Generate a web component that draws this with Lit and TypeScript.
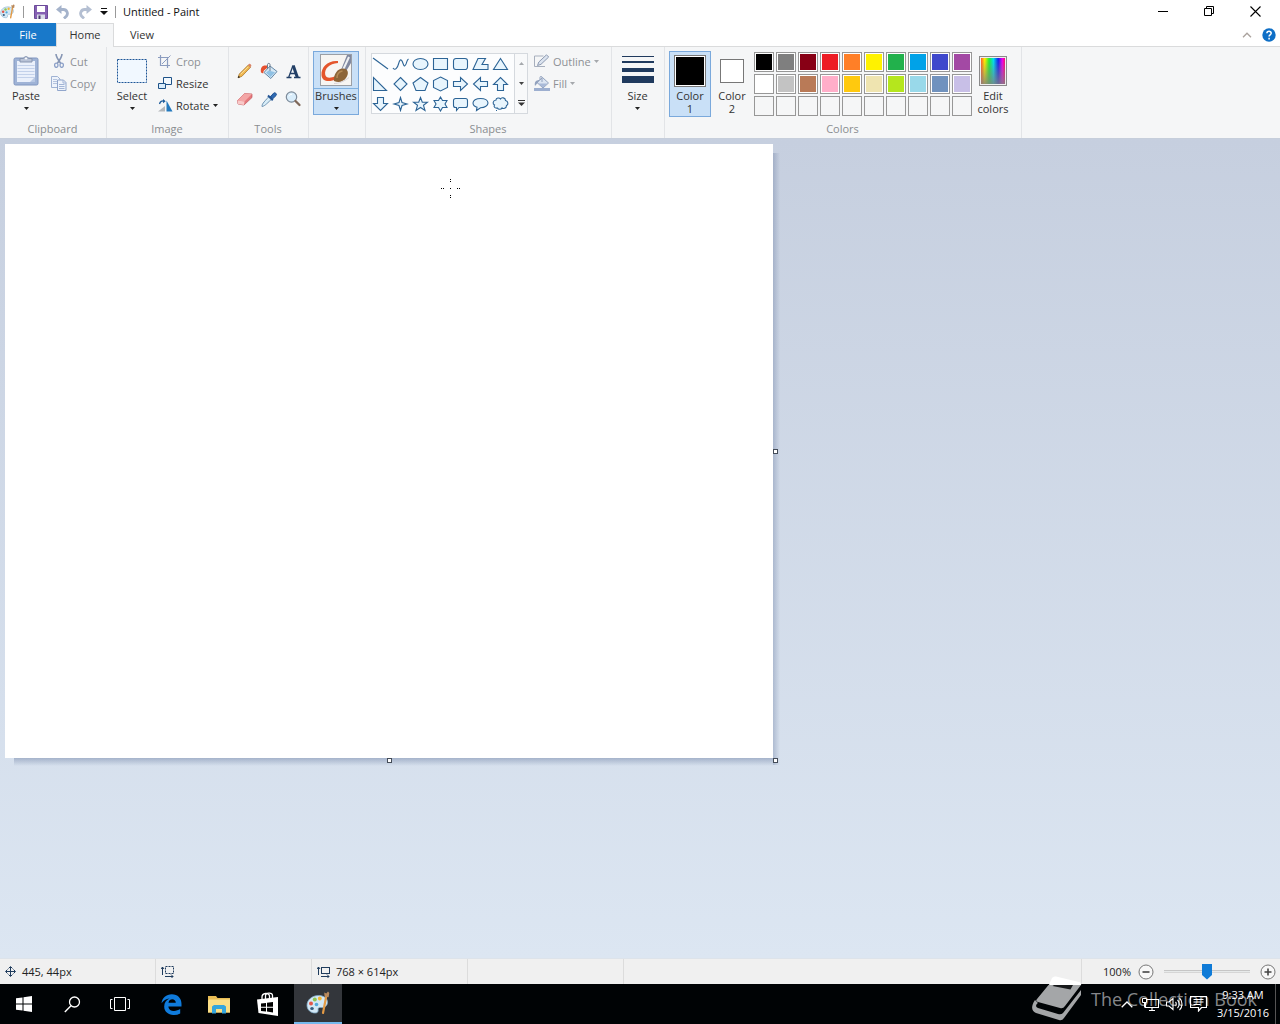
import { LitElement, html, svg, css, nothing, TemplateResult, SVGTemplateResult } from "lit";
import { customElement, property, state } from "lit/decorators.js";
import { classMap } from "lit/directives/class-map.js";
import { styleMap } from "lit/directives/style-map.js";

const icon = (w: number, h: number, body: SVGTemplateResult) =>
  html`<svg width=${w} height=${h} viewBox="0 0 ${w} ${h}" fill="none" aria-hidden="true">${body}</svg>`;

const caret = (color = "#222") => icon(5, 3, svg`<path d="M0 0H5L2.500 3Z" fill=${color}/>`);

const palette = (size: number) => html`<svg width=${size} height=${size} viewBox="0 0 24 24" fill="none" aria-hidden="true">
  <path d="M12.500 4.500C6 4.500 1 9 1 14.200c0 4.600 3.600 7.800 8.200 7.800 2.600 0 3.200-1.700 2.900-3.300-.3-1.700 1-2.500 2.600-2.200 3.900.6 6.800-1.800 6.800-5.200 0-4.200-4-6.800-9-6.800Z" fill="#d3e8f5" stroke="#7fa9c6" stroke-width=".8"/>
  <ellipse cx="6" cy="17.500" rx="1.800" ry="1.500" fill="#355d80"/>
  <circle cx="5" cy="12.500" r="2" fill="#e2574b"/>
  <circle cx="8.800" cy="8.600" r="2" fill="#8fc553"/>
  <circle cx="13.800" cy="7.500" r="1.900" fill="#f2b736"/>
  <circle cx="10.500" cy="13.500" r="1.800" fill="#53a9dc"/>
  <path d="M20.500 4 17 22" stroke="#e39a45" stroke-width="2.200" stroke-linecap="round"/>
  <path d="M18.600 5.500 18.200 1.500 20.300 2.500 22 .5 23.300 2 22.600 6.300Z" fill="#b98a5e"/>
</svg>`;

const icons = {
  save: icon(14, 14, svg`<path d="M.5.5h13v13H.5Z" fill="#8660b3" stroke="#6b4a99"/><path d="M3 1h8v6H3Z" fill="#fff"/><path d="M3 9.500h8V14H3Z" fill="#d9dce8"/><path d="M4.500 10.500h2V14h-2Z" fill="#4b3a70"/>`),
  undo: icon(14, 14, svg`<path d="M3 4.500h4.500a4 4 0 0 1 3 6.500L8 13.500" stroke="#a5b3cb" stroke-width="2.800"/><path d="M0 4.500 5.500 0v9Z" fill="#a5b3cb"/>`),
  redo: icon(14, 14, svg`<path d="M11 4.500H6.500a4 4 0 0 0-3 6.500L6 13.500" stroke="#b4bfd2" stroke-width="2.800"/><path d="M14 4.500 8.500 0v9Z" fill="#b4bfd2"/>`),
  customize: icon(8, 7, svg`<path d="M1 .5h6" stroke="#111"/><path d="M0 3h8L4 7Z" fill="#111"/>`),
  minimize: icon(11, 11, svg`<path d="M0 5.500h10" stroke="#000"/>`),
  restore: icon(11, 11, svg`<path d="M.5 2.500h7v7h-7ZM2.500 2.500v-2h7v7h-2" stroke="#000"/>`),
  close: icon(11, 11, svg`<path d="M.5.5l10 10M10.500.5l-10 10" stroke="#000" stroke-width="1.100"/>`),
  collapse: icon(10, 6, svg`<path d="M1 5.200 5 1.200 9 5.200" stroke="#aaa29d" stroke-width="1.300"/>`),
  help: icon(14, 14, svg`<circle cx="7" cy="7" r="6.700" fill="#0f6fc6"/><path d="M4.900 5.300c.1-2.700 4.400-2.600 4.300 0 0 1.500-2.100 1.600-2.100 3.100M7.100 9.800v1.600" stroke="#fff" stroke-width="1.500"/>`),
  paste: icon(26, 31, svg`<rect x="1" y="3" width="24" height="27" rx="1.500" fill="#9fb3d6" stroke="#8096c0"/><path d="M4 6h18v21H4Z" fill="#eaf0fb"/><path d="M4.500 10.500h17M4.500 13.500h17M4.500 16.500h17M4.500 19.500h17M4.500 22.500h17" stroke="#c3d1ea"/><path d="M17 27l5-5v5Z" fill="#b8c8e4"/><path d="M7 7V3.500h3.500a2.600 2.600 0 0 1 5 0H19V7Z" fill="#b8c2d6" stroke="#8795b0"/><circle cx="13" cy="3.500" r="1" fill="#fff"/>`),
  cut: icon(16, 14, svg`<path d="M5 0c0 3 1.500 5 4.800 9.500M11 0c0 3-1.500 5-4.800 9.500" stroke="#8796b4" stroke-width="1.600"/><ellipse cx="5.300" cy="11.300" rx="1.700" ry="2.100" stroke="#8ca0c8" stroke-width="1.300"/><ellipse cx="10.700" cy="11.300" rx="1.700" ry="2.100" stroke="#8ca0c8" stroke-width="1.300"/>`),
  copy: icon(16, 15, svg`<path d="M.5.500h6l2.500 2.500v8.500H.5Z" fill="#eef3fb" stroke="#9fb2d3"/><path d="M2 3.500h4M2 5.500h4M2 7.500h4" stroke="#b4c3de"/><path d="M6.500 4h6l2.500 2.500v8H6.500Z" fill="#eef3fb" stroke="#91a6cc"/><path d="M12 4v3h3M8 8.500h5.500M8 10.500h5.500M8 12.500h5.500" stroke="#a3b5d6"/>`),
  select: icon(30, 24, svg`<rect x=".5" y=".5" width="29" height="23" fill="#f1f8ff" stroke="#1d5596" stroke-dasharray="2 1"/>`),
  crop: icon(14, 13, svg`<path d="M2.500 0v10.500H12M0 2.500h9.500V13" stroke="#8b9cbf" stroke-width="1.200"/><path d="M4 9 12.500.5" stroke="#8b9cbf"/>`),
  resize: icon(14, 13, svg`<path d="M5.500.5h8v7h-8Z" fill="#f2f8fd" stroke="#1e5288"/><path d="M.5 6.500h7v5h-7Z" fill="#d8ecfb" stroke="#1e5288"/>`),
  rotate: icon(15, 13, svg`<path d="M0 12.500 7 7v5.500Z" fill="#b3b7bb"/><path d="M8.500 12.500V1.500L14.500 12.500Z" fill="#2379be"/><path d="M1.500 5C2 2.500 4 1.500 6 2" stroke="#1e5d9c" stroke-width="1.300"/><path d="M5 0l2.700 2.300L5 4.300Z" fill="#1e5d9c"/>`),
  pencil: icon(18, 18, svg`<path d="M2 15.800 3.300 12 12.300 3l2.300 2.200L5.800 14.400Z" fill="#f0b64d" stroke="#a97b35" stroke-width=".8"/><path d="M1.800 16 2.600 13.700 4.100 15.200Z" fill="#222"/><path d="M12 3l1-1c1-.8 3 1.200 2.200 2.200L14.300 5.200Z" fill="#d98569"/><path d="M4.800 12.300 12.200 4.900" stroke="#fbdf9a"/>`),
  bucket: icon(18, 18, svg`<path d="M10 4 17 9.500 10.800 16.500 4 10.500Z" fill="#d6e8f5" stroke="#6387a6"/><path d="M6 10.800 8.500 8.500 15 10.300 10.600 15Z" fill="#8fc1e4"/><path d="M10 9V2.500c0-1.500-2.500-1.500-2.500 0V7" stroke="#6c7d8f"/><path d="M1 10.500C.2 5.500 2 2.800 7 3.500L7 6 4 8.500c-.7 1-.6 2-.8 3Z" fill="#e5502f"/>`),
  text: icon(18, 18, svg`<path d="M2.500 15.500h5M10 15.500h6.500M4.800 15 9 3.500M6.300 11.500H12" stroke="#223f66" stroke-width="1.300"/><path d="M9.200 3.500 13.400 15.500" stroke="#223f66" stroke-width="3"/>`),
  eraser: icon(18, 18, svg`<path d="M1.500 10.500 8.500 3.500 16 4 16 7.500 8 15 2 14Z" fill="#e5787c" stroke="#c0585d" stroke-width=".7"/><path d="M1.500 10.500 8.500 3.500 16 4 8.500 11.500Z" fill="#f3a6a6"/><path d="M1.500 10.500 8.500 11.500 8 15 2 14Z" fill="#f9c9c8"/>`),
  picker: icon(18, 18, svg`<path d="M2 16.500C2 14 3 13 9 6.500l2.600 2.600C5.500 15 4.500 16 2 16.500Z" fill="#d8edf8" stroke="#5f87a8" stroke-width=".9"/><path d="M8 5.500 12.800 10.200M10.500 7.500 13.800 4.200" stroke="#245594" stroke-width="2"/><path d="M10.700 6.700 13.500 3.300a1.700 1.700 0 0 1 2.500 2.300L12.600 8.900Z" fill="#2f6bb3" stroke="#245594"/>`),
  zoom: icon(18, 18, svg`<circle cx="7.500" cy="7" r="5.200" fill="#d9edfb" stroke="#7d8b9a" stroke-width="1.200"/><path d="M11.500 11 15.500 15" stroke="#80695a" stroke-width="2.300" stroke-linecap="round"/><path d="M5 6.300C5.500 5 6.500 4.300 8 4.300" stroke="#fff"/>`),
  brush: icon(32, 32, svg`<rect x=".5" y=".5" width="31" height="31" fill="#f7f5f2" stroke="#9b9fa5"/><path d="M18 7C8 6 1 13 1.500 21c.5 7 8 7.500 15 4l-1-3c-5 2.500-9.500 2.500-10.300-1.500C4.300 15 9 9.500 18 9Z" fill="#e4552b"/><path d="M21 16 27 1h4v8l-6 10Z" fill="#8189a0"/><path d="M22.500 17 29 3" stroke="#eef1f3" stroke-width="2"/><path d="M14 27c-.5-7 3.500-12.500 9-12.500 5 0 6.500 5 3 9.500-2.700 3.500-7 5-12 3Z" fill="#8d6538"/><path d="M17 24c0-3.500 2-6.500 5.500-7" stroke="#b48a55" stroke-width="1.500"/><path d="M14 29.500c5 0 10-2 15-6" stroke="#d8d4da"/>`),
  outline: icon(16, 14, svg`<path d="M.5 2v10.500H11" stroke="#a7afbd"/><path d="M.5 2h9" stroke="#a7afbd"/><path d="M3.500 11.500 4.800 8 12.500.8l2.200 2.200L7 10.300Z" fill="#dbe3ef" stroke="#8e9bb2"/>`),
  fill: icon(16, 15, svg`<path d="M0 12h16v3H0Z" fill="#9dafd0"/><path d="M8.500 1.500 14.500 7 9 12 3 6.500Z" fill="#dce5f2" stroke="#92a2be"/><path d="M1 10C0 6 2 4 5.500 4L3.500 7Z" fill="#92a2be"/><path d="M4.500 7.500h9L9 11.500Z" fill="#a9bad8"/><path d="M8 6V1.500C8 0 6 0 6 1.500V4" stroke="#92a2be"/>`),
  size: icon(32, 30, svg`<path d="M0 0h32v1H0ZM0 5h32v2H0ZM0 12h32v4H0ZM0 20h32v7H0Z" fill="#203a5e"/>`),
  move: icon(11, 11, svg`<path d="M5.500 1v9M1 5.500h9" stroke="#1f3b5c"/><path d="M3.500 2.500 5.500.5l2 2M3.500 8.500l2 2 2-2M2.500 3.500l-2 2 2 2M8.500 3.500l2 2-2 2" stroke="#1f3b5c"/>`),
  selection: icon(13, 12, svg`<path d="M1.500 1v8M0 3l1.500-2L3 3M4 10.500h8M10 8.500l2 2-2 2" stroke="#1f3b5c"/><rect x="4.500" y=".5" width="8" height="7" stroke="#1f3b5c" stroke-dasharray="2 1"/>`),
  imageSize: icon(13, 12, svg`<path d="M1.500 1v8M0 3l1.500-2L3 3M4 10.500h8M10 8.500l2 2-2 2" stroke="#1f3b5c"/><rect x="4.500" y="1.500" width="8" height="6" stroke="#1f3b5c"/>`),
  minus: icon(16, 16, svg`<circle cx="8" cy="8" r="7" fill="#f7f7f7" stroke="#777"/><path d="M4.500 8h7" stroke="#444" stroke-width="1.600"/>`),
  plus: icon(16, 16, svg`<circle cx="8" cy="8" r="7" fill="#f7f7f7" stroke="#777"/><path d="M4.500 8h7M8 4.500v7" stroke="#444" stroke-width="1.600"/>`),
  start: icon(16, 16, svg`<path d="M0 2.300 6.500 1.400V7.500H0ZM7.500 1.200 16 0V7.500H7.500ZM0 8.500H6.500V14.600L0 13.700ZM7.500 8.500H16V16L7.500 14.800Z" fill="#fff"/>`),
  search: icon(17, 17, svg`<circle cx="10.500" cy="6" r="5" stroke="#fff" stroke-width="1.300"/><path d="M7 9.700.8 16" stroke="#fff" stroke-width="1.400"/>`),
  tasks: icon(20, 14, svg`<path d="M4.500.5h11v13h-11ZM2.500 2.500h-2v9h2M17.500 2.500h2v9h-2" stroke="#fff"/>`),
  edge: icon(21, 21, svg`<path d="M.5 9.300C1.200 3.800 5.200.3 10.800.3c6 0 9.700 4.200 9.700 9.700v2.400H7.400c.2 5.200 7.400 5.600 11.800 2.700v4.300C12.300 23 3.200 20.500 3.200 12.600c0-4 2.200-6.800 5.400-8.100-3.600.2-6.200 2-8.100 4.800ZM7.500 8.700h7.300c0-4.600-6.800-4.700-7.300 0Z" fill="#0f7bdc"/>`),
  folder: icon(22, 19, svg`<path d="M0 1h8l1.500 2H22v14.500H0Z" fill="#e9bd55"/><path d="M1 4.500h21v13H0V5.500Z" fill="#fbdf86"/><path d="M4 18.500V11.500L6 10h10l2 1.500v7h-4V14H8v4.500Z" fill="#35a6dd"/>`),
  store: icon(21, 24, svg`<path d="M0 7.500 21 5v19L1.500 21Z" fill="#fff"/><path d="M5 8V5C5 1 12 0 12.500 4v3M8.500 7V4c0-3.500 7-4 7-.5V6" stroke="#fff" stroke-width="1.300"/><path d="M4 11.500l5-.6v3.800H4ZM10 10.800l6-.8v4.700h-6ZM4 15.700h5v3.800l-5-.6ZM10 15.700h6v4.700l-6-.8Z" fill="#000"/>`),
  up: icon(12, 7, svg`<path d="M.7 6.300 6 1l5.300 5.300" stroke="#fff" stroke-width="1.300"/>`),
  network: icon(17, 15, svg`<path d="M5 2.500h11.500v8H3.500V6M7 13.500h6M10 10.500v3" stroke="#fff" stroke-width="1.100"/><path d="M.5 1.500h4v4h-4Z" fill="#000" stroke="#fff"/><path d="M2.500 5.500v5" stroke="#fff"/>`),
  volume: icon(17, 14, svg`<path d="M.5 5v4h2.500L7 12.500v-11L3 5ZM9.500 5c1 1 1 3 0 4M11.500 3c2.200 2 2.200 6 0 8M13.500 1c3.300 3 3.300 9 0 12" stroke="#fff" stroke-width="1.100"/>`),
  action: icon(17, 16, svg`<path d="M.5.500h16v11h-5L8.500 15v-3.500h-8ZM3.500 3.500h10M3.500 6h10M3.500 8.500h7" stroke="#fff" stroke-width="1.200"/>`),
};

const shapes: [string, string][] = [
  ["Line", "M1 2 16 13"],
  ["Curve", "M1 12C3 15 5.500 12 6.500 8S9 2 10.500 6s1.500 5 3 3 1-5 3-6"],
  ["Oval", "M8.500 2.500C13 2.500 16 5 16 8s-3 5.500-7.500 5.500S1 11 1 8s3-5.500 7.500-5.500Z"],
  ["Rectangle", "M1.500 2.500h14v11h-14Z"],
  ["Rounded rectangle", "M4 2.500h9a2.500 2.500 0 0 1 2.500 2.500v6a2.500 2.500 0 0 1-2.500 2.500H4A2.500 2.500 0 0 1 1.500 11V5A2.500 2.500 0 0 1 4 2.500Z"],
  ["Polygon", "M6 2.500h7.500L10 8.500h6v5H1Z"],
  ["Triangle", "M8.500 2.500 15.500 13.500h-14Z"],
  ["Right triangle", "M1.500 1.500v13h13Z"],
  ["Diamond", "M8.500 1.500 15 8l-6.500 6.500L2 8Z"],
  ["Pentagon", "M8.500 1.500 16 7l-3 7.500H4L1 7Z"],
  ["Hexagon", "M8.500 1 15.500 4.500v7L8.500 15 1.500 11.500v-7Z"],
  ["Right arrow", "M1.500 5.500h7v-4L15.500 8l-7 6.500v-4h-7Z"],
  ["Left arrow", "M15.500 5.500h-7v-4L1.500 8l7 6.500v-4h7Z"],
  ["Up arrow", "M5.500 14.500v-6h-4L8.500 1.500l7 7h-4v6Z"],
  ["Down arrow", "M5.500 1.500v6h-4L8.500 14.500l7-7h-4v-6Z"],
  ["Four-point star", "M8.500 1.500 10 6.500 15 8 10 9.500 8.500 14.500 7 9.500 2 8 7 6.500Z"],
  ["Five-point star", "M8.500 1.500 10.300 6.200H15.500L11.500 9.300 13 14.500 8.500 11.500 4 14.500 5.500 9.300 1.500 6.200H6.700Z"],
  ["Six-point star", "M8.500 1 10.500 4.500H15L13 8l2 3.500h-4.500L8.500 15l-2-3.500H2L4 8 2 4.500h4.500Z"],
  ["Rounded callout", "M3.500 2.500h10a2 2 0 0 1 2 2v5a2 2 0 0 1-2 2H7L4.500 14.500v-3h-1a2 2 0 0 1-2-2v-5a2 2 0 0 1 2-2Z"],
  ["Oval callout", "M8.500 2.500C13 2.500 16 4.500 16 7s-3 4.700-7.500 4.700L4.500 14.500 5 11.200C2.500 10.500 1 9 1 7c0-2.500 3-4.500 7.500-4.500Z"],
  ["Cloud callout", "M4 4C4 1.500 7.500 1.500 8.500 3 9.500 1 13.500 1.500 13.500 4.500 16.500 5 16.500 9 14.500 9.500 14.500 12.500 11 13 10 12 9 14 6 13.500 5.500 12 2.500 12.500 1.500 10.500 2.500 9 .5 8 .5 4.500 4 4ZM4 14.500h1"],
];

const colors = [
  ["Black", "#000000"], ["Gray 50%", "#7f7f7f"], ["Dark red", "#880015"], ["Red", "#ed1c24"], ["Orange", "#ff7f27"],
  ["Yellow", "#fff200"], ["Green", "#22b14c"], ["Turquoise", "#00a2e8"], ["Indigo", "#3f48cc"], ["Purple", "#a349a4"],
  ["White", "#ffffff"], ["Gray 25%", "#c3c3c3"], ["Brown", "#b97a57"], ["Rose", "#ffaec9"], ["Gold", "#ffc90e"],
  ["Light yellow", "#efe4b0"], ["Lime", "#b5e61d"], ["Light turquoise", "#99d9ea"], ["Blue-gray", "#7092be"], ["Lavender", "#c8bfe7"],
];

const base = css`
  * { box-sizing: border-box; }
  button { font: inherit; color: inherit; background: none; border: 0; padding: 0; margin: 0; }
  svg { display: block; flex: none; }
`;

@customElement("ribbon-group")
class RibbonGroup extends LitElement {
  @property() label = "";
  static styles = css`
    :host { display: flex; flex-direction: column; flex: none; padding: 4px 5px 1px 4px; border-right: 1px solid #e2e4e7; }
    .body { display: flex; align-items: flex-start; height: 70px; }
    .label { height: 16px; line-height: 16px; text-align: center; color: #8a8d91; }
  `;
  render() {
    return html`<div class="body"><slot></slot></div><div class="label">${this.label}</div>`;
  }
}

@customElement("paint-ribbon")
class PaintRibbon extends LitElement {
  @state() private primary = "#000000";
  static styles = [base, css`
    :host { display: flex; background: #f5f6f7; border-top: 1px solid #dadbdc; border-bottom: 1px solid #c6cedb; }
    .big { display: flex; flex-direction: column; align-items: center; height: 66px; border: 1px solid transparent; line-height: 13px; }
    .pic { display: flex; align-items: center; justify-content: center; height: 37px; }
    .big .drop { padding-top: 5px; }
    .w44 { width: 44px; }
    .w42 { width: 42px; }
    .brushes { width: 46px; height: 64px; margin-right: 1px; }
    .brushes .pic { width: 100%; border-bottom: 1px solid #7fb1e0; }
    .chosen { background: #c9e0f7; border-color: #7aa9dc; }
    .rows { display: grid; grid-auto-rows: 22px; justify-items: start; align-self: flex-start; margin-top: -1px; }
    .row { display: flex; align-items: center; gap: 3px; white-space: nowrap; }
    .ico { display: flex; width: 16px; justify-content: center; }
    .off { color: #8d9095; }
    .clip { display: flex; gap: 3px; width: 97px; }
    .image { display: flex; gap: 4px; width: 112px; }
    .tools { display: grid; grid-template-columns: repeat(3, 24px); grid-auto-rows: 28px; width: 70px; padding-top: 6px; }
    .tools button { display: flex; align-items: center; justify-content: center; }
    .shapes { display: flex; gap: 6px; width: 236px; padding-left: 1px; }
    .gallery { display: flex; align-self: flex-start; margin-top: 2px; border: 1px solid #d5d9de; background: #fcfdfe; }
    .grid { display: grid; grid-template-columns: repeat(7, 20px); grid-auto-rows: 19px; row-gap: 1px; padding-right: 2px; }
    .grid button { display: flex; align-items: center; }
    .scroll { display: grid; grid-template-rows: repeat(3, 1fr); width: 13px; border-left: 1px solid #d5d9de; background: #f8f9fa; }
    .scroll button { display: flex; align-items: center; justify-content: center; }
    .w43 { width: 43px; }
    .colors { display: flex; width: 347px; }
    .box { border: 1px solid #777; box-shadow: inset 0 0 0 1px #fff; }
    .first { width: 32px; height: 32px; }
    .second { width: 24px; height: 24px; background: #fff; }
    .swatches { display: grid; grid-template-columns: repeat(10, 20px); grid-auto-rows: 20px; gap: 2px; padding: 1px 0 0 1px; }
    .swatch { border: 1px solid #979797; }
    .filled { box-shadow: inset 0 0 0 1px #fff; }
    .spectrum { width: 28px; height: 30px; border: 1px solid #8a8a8a; box-shadow: inset 0 0 0 1px #eee;
      background: linear-gradient(to bottom, transparent 10%, rgba(128,128,128,.85)), linear-gradient(to right, #f33, #fe0 18%, #2e3 35%, #0de 52%, #12e 70%, #e0e 86%, #f13); }
  `];
  private row(name: string, pic: TemplateResult, off = false, drop = false) {
    return html`<button class=${classMap({ row: true, off })} ?disabled=${off}>
      <span class="ico">${pic}</span><span>${name}</span>${drop ? caret(off ? "#a5a8ac" : "#222") : nothing}</button>`;
  }
  render() {
    const tools: [string, TemplateResult][] = [["Pencil", icons.pencil], ["Fill with color", icons.bucket], ["Text", icons.text],
      ["Eraser", icons.eraser], ["Color picker", icons.picker], ["Magnifier", icons.zoom]];
    return html`
      <ribbon-group label="Clipboard">
        <div class="clip">
          <button class="big w44"><span class="pic">${icons.paste}</span><span>Paste</span><span class="drop">${caret()}</span></button>
          <div class="rows">${this.row("Cut", icons.cut, true)}${this.row("Copy", icons.copy, true)}</div>
        </div>
      </ribbon-group>
      <ribbon-group label="Image">
        <div class="image">
          <button class="big w42"><span class="pic">${icons.select}</span><span>Select</span><span class="drop">${caret()}</span></button>
          <div class="rows">${this.row("Crop", icons.crop, true)}${this.row("Resize", icons.resize)}${this.row("Rotate", icons.rotate, false, true)}</div>
        </div>
      </ribbon-group>
      <ribbon-group label="Tools">
        <div class="tools">${tools.map(([n, p]) => html`<button aria-label=${n}>${p}</button>`)}</div>
      </ribbon-group>
      <ribbon-group>
        <button class="big brushes chosen"><span class="pic">${icons.brush}</span><span>Brushes</span><span class="drop">${caret()}</span></button>
      </ribbon-group>
      <ribbon-group label="Shapes">
        <div class="shapes">
          <div class="gallery">
            <div class="grid">${shapes.map(([n, d], i) => html`<button aria-label=${n}>
              ${icon(17, 16, svg`<path d=${d} fill=${i < 2 ? "none" : "#e8f5fd"} stroke="#2c6496" stroke-width="1.100"/>`)}</button>`)}</div>
            <div class="scroll">
              <button aria-label="Scroll up" disabled>${icon(5, 3, svg`<path d="M0 3h5L2.500 0Z" fill="#a5a8ac"/>`)}</button>
              <button aria-label="Scroll down">${caret("#444")}</button>
              <button aria-label="More shapes">${icon(7, 6, svg`<path d="M0 .5h7" stroke="#333"/><path d="M0 2.500h7L3.500 6Z" fill="#333"/>`)}</button>
            </div>
          </div>
          <div class="rows">${this.row("Outline", icons.outline, true, true)}${this.row("Fill", icons.fill, true, true)}</div>
        </div>
      </ribbon-group>
      <ribbon-group>
        <button class="big w43"><span class="pic">${icons.size}</span><span>Size</span><span class="drop">${caret()}</span></button>
      </ribbon-group>
      <ribbon-group label="Colors">
        <div class="colors">
          <button class="big w42 chosen"><span class="pic"><span class="box first" style=${styleMap({ background: this.primary })}></span></span><span>Color<br>1</span></button>
          <button class="big w42"><span class="pic"><span class="box second"></span></span><span>Color<br>2</span></button>
          <div class="swatches">${Array.from({ length: 30 }, (_, i) => {
            const c = colors[i];
            return c
              ? html`<button class="swatch filled" aria-label=${c[0]} style=${styleMap({ backgroundColor: c[1] })} @click=${() => (this.primary = c[1])}></button>`
              : html`<button class="swatch" aria-label="Empty color"></button>`;
          })}</div>
          <button class="big w42"><span class="pic"><span class="spectrum"></span></span><span>Edit<br>colors</span></button>
        </div>
      </ribbon-group>`;
  }
}

@customElement("app-root")
class AppRoot extends LitElement {
  @state() private zoom = 50;
  static styles = [base, css`
    :host { display: flex; flex-direction: column; min-height: 100vh; font: 11px "Open Sans", "Noto Sans", sans-serif; color: #333; background: #fff; }
    .title { display: flex; align-items: center; height: 23px; color: #111; }
    .quick { display: flex; align-items: center; gap: 8px; }
    .bar { width: 1px; height: 12px; background: #999; }
    .quick .bar + button { margin-left: 2px; }
    .quick .bar:last-child { margin-left: -1px; }
    h1 { margin: 0 0 0 7px; font: inherit; flex: 1; }
    .win { display: flex; padding-right: 2px; }
    .win button { display: flex; width: 46px; height: 22px; align-items: center; justify-content: center; }
    .tabs { display: flex; align-items: stretch; height: 23px; }
    .tab { width: 56px; text-align: center; }
    .file { background: #1979ca; color: #fff; }
    .home { width: 58px; background: #f5f6f7; border: 1px solid #dadbdc; border-bottom: 0; margin-bottom: -1px; padding-bottom: 2px; position: relative; }
    .aid { display: flex; align-items: center; gap: 10px; margin-left: auto; padding-right: 4px; }
    .work { flex: 1; padding: 5px; background: linear-gradient(#c6cfdf, #dce6f2); }
    .paper { position: relative; width: 768px; height: 614px; background: #fff; }
    .paper::before { content: ""; position: absolute; left: 100%; top: 9px; bottom: -7px; width: 7px; background: linear-gradient(to right, rgba(90,110,150,.32), transparent); }
    .paper::after { content: ""; position: absolute; top: 100%; left: 9px; right: 0; height: 8px; background: linear-gradient(rgba(90,110,150,.4), transparent); }
    .grip { position: absolute; z-index: 1; width: 5px; height: 5px; background: #fff; border: 1px solid #444c58; }
    .east { left: 768px; top: 305px; }
    .south { left: 382px; top: 614px; }
    .corner { left: 768px; top: 614px; }
    .cross { position: absolute; left: 436px; top: 35px; }
    .status { display: flex; height: 26px; background: #f0f0f0; border-top: 1px solid #dde3ea; color: #222; }
    .cell { display: flex; align-items: center; gap: 6px; width: 156px; padding-left: 5px; border-right: 1px solid #dcdcdc; }
    .zoom { display: flex; align-items: center; margin-left: auto; padding: 0 4px 0 21px; gap: 7px; border-left: 1px solid #dcdcdc; }
    .range { appearance: none; width: 86px; height: 18px; margin: 0 3px; background: linear-gradient(#c6c6c6 1px, #e7eaea 1px 2px, #d6d6d6 2px) center / 100% 3px no-repeat; }
    .range::-webkit-slider-thumb { appearance: none; width: 10px; height: 16px; background: #0f7bd7; clip-path: polygon(0 0, 100% 0, 100% 72%, 50% 100%, 0 72%); }
    .task { display: flex; position: relative; height: 40px; background: #000305; color: #fff; }
    .task button { display: flex; align-items: center; justify-content: center; width: 48px; }
    .apps { display: flex; margin-left: 3px; }
    .task .active { background: #33363b; border-bottom: 2px solid #76b9ed; margin-left: 3px; }
    .tray { display: flex; margin-left: auto; position: relative; z-index: 1; }
    .task .tray button { width: 24px; }
    .clock { display: flex; flex-direction: column; align-items: center; justify-content: center; padding: 0 6px; line-height: 18px; }
    .desk { width: 5px; border-left: 1px solid #555; }
    .mark { position: absolute; right: 23px; bottom: 0; display: flex; align-items: center; gap: 8px; height: 50px; color: #85878a; font-size: 18px; line-height: 24px; white-space: nowrap; pointer-events: none; }
  `];
  render() {
    return html`
      <header class="title">
        <div class="quick">${palette(15)}<span class="bar"></span>
          <button aria-label="Save">${icons.save}</button><button aria-label="Undo">${icons.undo}</button>
          <button aria-label="Redo">${icons.redo}</button><button aria-label="Customize toolbar">${icons.customize}</button><span class="bar"></span></div>
        <h1>Untitled - Paint</h1>
        <div class="win"><button aria-label="Minimize">${icons.minimize}</button><button aria-label="Restore">${icons.restore}</button><button aria-label="Close">${icons.close}</button></div>
      </header>
      <nav class="tabs">
        <button class="tab file">File</button><button class="tab home">Home</button><button class="tab">View</button>
        <div class="aid"><button aria-label="Collapse ribbon">${icons.collapse}</button><button aria-label="Help">${icons.help}</button></div>
      </nav>
      <paint-ribbon></paint-ribbon>
      <main class="work">
        <div class="paper">
          <span class="grip east"></span><span class="grip south"></span><span class="grip corner"></span>
          <svg class="cross" width="19" height="19" viewBox="0 0 19 19" aria-hidden="true"><path d="M9 0h1v1H9ZM9 2h1v1H9ZM9 9h1v1H9ZM9 16h1v1H9ZM9 18h1v1H9ZM0 9h1v1H0ZM2 9h1v1H2ZM16 9h1v1h-1ZM18 9h1v1h-1Z" fill="#000"/></svg>
        </div>
      </main>
      <footer class="status">
        <div class="cell">${icons.move}<span>445, 44px</span></div>
        <div class="cell">${icons.selection}</div>
        <div class="cell">${icons.imageSize}<span>768 × 614px</span></div>
        <div class="cell"></div>
        <div class="zoom"><label for="zoom">100%</label><button aria-label="Zoom out">${icons.minus}</button>
          <input class="range" id="zoom" type="range" min="0" max="100" .value=${String(this.zoom)}>
          <button aria-label="Zoom in">${icons.plus}</button></div>
      </footer>
      <div class="task">
        <button aria-label="Start">${icons.start}</button><button aria-label="Search">${icons.search}</button><button aria-label="Task view">${icons.tasks}</button>
        <div class="apps"><button aria-label="Edge">${icons.edge}</button><button aria-label="File Explorer">${icons.folder}</button><button aria-label="Store">${icons.store}</button>
          <button class="active" aria-label="Paint">${palette(24)}</button></div>
        <div class="mark">
          <svg width="51" height="48" viewBox="0 0 51 48" fill="none" aria-hidden="true">
            <path d="M17 10 20 3Q21 1 24 1.500L47 7Q50 8 49 10Z" fill="#fff"/>
            <path d="M16.500 10H49L33 31Q31 34 28 33L6 27Q3 26 5 24Z" fill="#a4a6a8"/>
            <path d="M22 10H41L38.500 14.500 20.500 11Z" fill="#17191b"/>
            <path d="M3 25C-1 31-1 36 4 38L27 45Q30 46 32 43L49 20V15L31 38Q29 40 26 39L6 33C3 32 4 29 6 28Z" fill="#a4a6a8"/>
          </svg><span>The Collection Book</span></div>
        <div class="tray"><button aria-label="Show hidden icons">${icons.up}</button><button aria-label="Network">${icons.network}</button>
          <button aria-label="Volume">${icons.volume}</button><button aria-label="Notifications">${icons.action}</button>
          <div class="clock"><span>9:33 AM</span><span>3/15/2016</span></div><div class="desk"></div></div>
      </div>`;
  }
}
